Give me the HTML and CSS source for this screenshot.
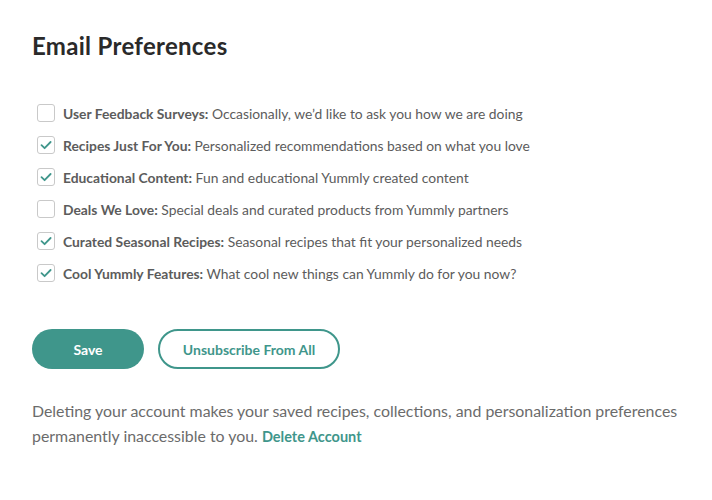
FILE: index.html
```html
<!DOCTYPE html>
<html>
<head>
<meta charset="utf-8">
<link rel="stylesheet" href="styles.css">
</head>
<body>
<div class="page">
  <h1 class="title">Email Preferences</h1>
  <ul class="prefs">
    <li class="pref"><span class="box"></span><span class="label"><b>User Feedback Surveys:</b> Occasionally, we’d like to ask you how we are doing</span></li>
    <li class="pref"><span class="box checked"><svg viewBox="0 0 18 18" width="18" height="18"><path d="M4.5 9.2 L7.6 12.2 L13.6 6" fill="none" stroke="#3f968b" stroke-width="1.8" stroke-linecap="round" stroke-linejoin="round"/></svg></span><span class="label"><b>Recipes Just For You:</b> Personalized recommendations based on what you love</span></li>
    <li class="pref"><span class="box checked"><svg viewBox="0 0 18 18" width="18" height="18"><path d="M4.5 9.2 L7.6 12.2 L13.6 6" fill="none" stroke="#3f968b" stroke-width="1.8" stroke-linecap="round" stroke-linejoin="round"/></svg></span><span class="label"><b>Educational Content:</b> Fun and educational Yummly created content</span></li>
    <li class="pref"><span class="box"></span><span class="label"><b>Deals We Love:</b> Special deals and curated products from Yummly partners</span></li>
    <li class="pref"><span class="box checked"><svg viewBox="0 0 18 18" width="18" height="18"><path d="M4.5 9.2 L7.6 12.2 L13.6 6" fill="none" stroke="#3f968b" stroke-width="1.8" stroke-linecap="round" stroke-linejoin="round"/></svg></span><span class="label"><b>Curated Seasonal Recipes:</b> Seasonal recipes that fit your personalized needs</span></li>
    <li class="pref"><span class="box checked"><svg viewBox="0 0 18 18" width="18" height="18"><path d="M4.5 9.2 L7.6 12.2 L13.6 6" fill="none" stroke="#3f968b" stroke-width="1.8" stroke-linecap="round" stroke-linejoin="round"/></svg></span><span class="label"><b>Cool Yummly Features:</b> What cool new things can Yummly do for you now?</span></li>
  </ul>
  <div class="actions">
    <button class="btn btn-primary">Save</button>
    <button class="btn btn-outline">Unsubscribe From All</button>
  </div>
  <p class="note">Deleting your account makes your saved recipes, collections, and personalization preferences permanently inaccessible to you. <a class="link">Delete Account</a></p>
</div>
</body>
</html>
```
FILE: styles.css
```css
* { box-sizing: border-box; }
body {
  margin: 0;
  background: #fff;
  font-family: "Lato", "Noto Sans", sans-serif;
  color: #555;
}
.page {
  padding: 32px 32px 0 32px;
}
.title {
  margin: 0;
  font-size: 24px;
  font-weight: 700;
  color: #2a2a2a;
  line-height: 28px;
  letter-spacing: 0.3px;
}
.prefs {
  list-style: none;
  margin: 44px 0 0 0;
  padding: 0 0 0 5px;
  display: flex;
  flex-direction: column;
  gap: 14px;
}
.pref {
  display: flex;
  align-items: center;
  gap: 8px;
  height: 18px;
}
.box {
  width: 18px;
  height: 18px;
  border: 1px solid #c9c9c9;
  border-radius: 3px;
  flex: none;
  position: relative;
}
.box svg {
  position: absolute;
  left: -1px;
  top: -1px;
}
.label {
  font-size: 13.85px;
  color: #5c5c5c;
}
.label b {
  font-weight: 700;
  color: #5c5c5c;
}
.actions {
  display: flex;
  gap: 14px;
  margin-top: 47px;
}
.btn {
  height: 40px;
  border-radius: 20px;
  font-family: inherit;
  font-size: 14px;
  font-weight: 700;
  cursor: pointer;
}
.btn-primary {
  width: 112px;
  background: #3f968b;
  border: none;
  color: #fff;
}
.btn-outline {
  width: 182px;
  background: #fff;
  border: 2px solid #3f968b;
  color: #3f968b;
}
.note {
  margin: 29px -24px 0 0;
  font-size: 15.9px;
  line-height: 25px;
  color: #6b6b6b;
}
.link {
  color: #3f968b;
  font-weight: 700;
  font-size: 14.5px;
  line-height: 1;
}
```
